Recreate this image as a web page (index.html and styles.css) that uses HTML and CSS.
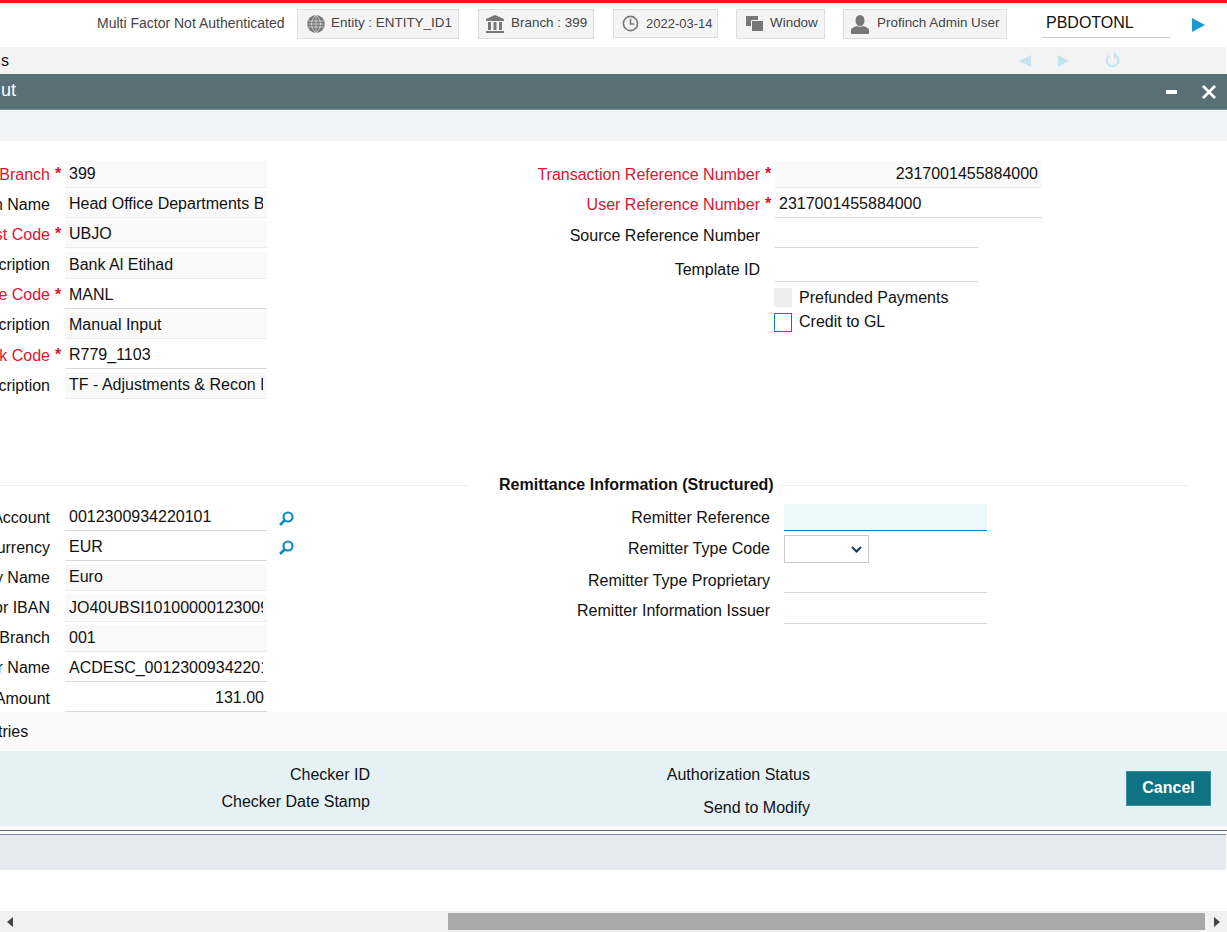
FILE: index.html
```html
<!DOCTYPE html>
<html lang="en">
<head>
    <meta charset="UTF-8" />
    <meta name="viewport" content="width=device-width, initial-scale=1" />
    <title>Transaction Input</title>
    <link rel="stylesheet" href="styles.css">
</head>
<body>
    <div class="redbar"></div>

    <header class="topbar">
        <span class="auth-note">Multi Factor Not Authenticated</span>
        <div class="top-btn btn-entity">
            <svg width="20" height="20" viewBox="0 0 20 20"><circle cx="10" cy="10" r="9" fill="#777"/><path d="M1 7h18M1 10h18M1 13h18M10 1v18M10 1c-6 5-6 13 0 18M10 1c6 5 6 13 0 18" fill="none" stroke="#f4f4f4" stroke-width=".6"/></svg>
            <span>Entity : ENTITY_ID1</span>
        </div>
        <div class="top-btn btn-branch">
            <svg width="20" height="20" viewBox="0 0 20 20"><path d="M10 1l9 4v2H1V5zM3 8h3v8H3zM8.500 8h3v8h-3zM14 8h3v8h-3zM1 17h18v2H1z" fill="#777"/></svg>
            <span>Branch : 399</span>
        </div>
        <div class="top-btn btn-date">
            <svg width="17" height="17" viewBox="0 0 18 18"><circle cx="9" cy="9" r="7.500" fill="none" stroke="#777" stroke-width="1.700"/><path d="M9 4v5.500h4" fill="none" stroke="#777" stroke-width="1.700"/></svg>
            <span>2022-03-14</span>
        </div>
        <div class="top-btn btn-window">
            <svg width="18" height="16" viewBox="0 0 18 16"><path d="M0 0h12v10H0z" fill="#777"/><path d="M5.500 4.500h12v11h-12z" fill="#777" stroke="#f4f4f4"/></svg>
            <span>Window</span>
        </div>
        <div class="top-btn btn-user">
            <svg width="18" height="19" viewBox="0 0 18 19"><ellipse cx="9" cy="5.500" rx="4.500" ry="5.500" fill="#777"/><path d="M0 19v-4c0-2 4-3.500 6-4 1.500 1 4.500 1 6 0 2 .5 6 2 6 4v4z" fill="#777"/></svg>
            <span>Profinch Admin User</span>
        </div>
        <div class="func-input">PBDOTONL</div>
        <svg class="go-icon" width="13" height="14" viewBox="0 0 13 14"><path d="M0 0l13 7-13 7z" fill="#1b9ad6"/></svg>
    </header>

    <div class="tabbar">
        <span class="tab-text">s</span>
        <div class="tab-tools">
            <svg width="12" height="12" viewBox="0 0 12 12"><path d="M12 0v12L0 6z" fill="#c5e3f0"/></svg>
            <svg class="tool-next" width="11" height="12" viewBox="0 0 11 12"><path d="M0 0v12l11-6z" fill="#c5e3f0"/></svg>
            <svg class="tool-refresh" width="15" height="16" viewBox="0 0 15 16"><path d="M10.500 4.500a5.800 5.800 0 1 1-6 0" fill="none" stroke="#c5e3f0" stroke-width="2"/><path d="M9 0v7l4.500-1z" fill="#c5e3f0"/></svg>
        </div>
    </div>

    <div class="titlebar">
        <span class="title-text">ut</span>
        <div class="title-tools">
            <span class="win-min"></span>
            <svg width="14" height="14" viewBox="0 0 14 14"><path d="M1 1l12 12M13 1L1 13" stroke="#fff" stroke-width="2.600"/></svg>
        </div>
    </div>

    <div class="toolbar"></div>

    <main class="form">
        <section class="upper">
            <div class="field-col">
                <label class="field-label req">Branch</label><span class="star">*</span>
                <div class="value ro"><span>399</span></div><i></i>
                <label class="field-label">n Name</label><span></span>
                <div class="value ro"><span>Head Office Departments B</span></div><i></i>
                <label class="field-label req">st Code</label><span class="star">*</span>
                <div class="value ro"><span>UBJO</span></div><i></i>
                <label class="field-label">cription</label><span></span>
                <div class="value ro"><span>Bank Al Etihad</span></div><i></i>
                <label class="field-label req">e Code</label><span class="star">*</span>
                <div class="value"><span>MANL</span></div><i></i>
                <label class="field-label">cription</label><span></span>
                <div class="value ro"><span>Manual Input</span></div><i></i>
                <label class="field-label req">k Code</label><span class="star">*</span>
                <div class="value"><span>R779_1103</span></div><i></i>
                <label class="field-label">cription</label><span></span>
                <div class="value ro"><span>TF - Adjustments &amp; Recon E</span></div><i></i>
            </div>

            <div class="ref-col">
                <div class="ref-row">
                    <label class="field-label req">Transaction Reference Number</label><span class="star">*</span>
                    <div class="value ro wide num"><span>2317001455884000</span></div>
                </div>
                <div class="ref-row">
                    <label class="field-label req">User Reference Number</label><span class="star">*</span>
                    <div class="value wide"><span>2317001455884000</span></div>
                </div>
                <div class="ref-row ref-low">
                    <label class="field-label">Source Reference Number</label><span></span>
                    <div class="value"></div>
                </div>
                <div class="ref-row ref-low ref-tall">
                    <label class="field-label">Template ID</label><span></span>
                    <div class="value"></div>
                </div>
                <div class="check-row check-first"><span class="check off"></span>Prefunded Payments</div>
                <div class="check-row"><span class="check"></span>Credit to GL</div>
            </div>
        </section>

        <div class="section-head">
            <span class="head-line line-left"></span>
            <h2>Remittance Information (Structured)</h2>
            <span class="head-line line-right"></span>
        </div>

        <section class="lower">
            <div class="field-col">
                <label class="field-label">Account</label><span></span>
                <div class="value"><span>0012300934220101</span></div>
                <svg class="lookup" width="15" height="15" viewBox="0 0 15 15"><circle cx="9" cy="6" r="4.500" fill="none" stroke="#0e8cc4" stroke-width="2.200"/><path d="M5.500 9.500L1 14" stroke="#0e8cc4" stroke-width="2.600"/></svg>
                <label class="field-label">urrency</label><span></span>
                <div class="value"><span>EUR</span></div>
                <svg class="lookup lookup-up" width="15" height="15" viewBox="0 0 15 15"><circle cx="9" cy="6" r="4.500" fill="none" stroke="#0e8cc4" stroke-width="2.200"/><path d="M5.500 9.500L1 14" stroke="#0e8cc4" stroke-width="2.600"/></svg>
                <label class="field-label">y Name</label><span></span>
                <div class="value ro"><span>Euro</span></div><i></i>
                <label class="field-label">or IBAN</label><span></span>
                <div class="value ro"><span>JO40UBSI10100000123009</span></div><i></i>
                <label class="field-label">Branch</label><span></span>
                <div class="value ro"><span>001</span></div><i></i>
                <label class="field-label">r Name</label><span></span>
                <div class="value"><span>ACDESC_001230093422011</span></div><i></i>
                <label class="field-label">Amount</label><span></span>
                <div class="value num"><span>131.00</span></div><i></i>
            </div>

            <div class="remit-col">
                <div class="remit-row">
                    <label class="field-label">Remitter Reference</label>
                    <div class="value focus"></div>
                </div>
                <div class="remit-row">
                    <label class="field-label">Remitter Type Code</label>
                    <div class="select-box">
                        <svg width="11" height="7" viewBox="0 0 11 7"><path d="M1 1l4.500 4.500L10 1" fill="none" stroke="#1a3a5c" stroke-width="2"/></svg>
                    </div>
                </div>
                <div class="remit-row remit-low">
                    <label class="field-label">Remitter Type Proprietary</label>
                    <div class="value"></div>
                </div>
                <div class="remit-row">
                    <label class="field-label">Remitter Information Issuer</label>
                    <div class="value"></div>
                </div>
            </div>
        </section>
    </main>

    <div class="entries">tries</div>

    <footer class="audit">
        <div class="audit-col col-checker">
            <span>Checker ID</span>
            <span>Checker Date Stamp</span>
        </div>
        <div class="audit-col col-status">
            <span>Authorization Status</span>
            <span class="send-modify">Send to Modify</span>
        </div>
        <button class="cancel-btn" type="button">Cancel</button>
    </footer>

    <div class="rule-dark"></div>
    <div class="rule-light"></div>
    <div class="statusband"></div>

    <div class="hscroll">
        <svg width="6" height="10" viewBox="0 0 6 10"><path d="M6 0v10L0 5z" fill="#444"/></svg>
        <div class="hscroll-thumb"></div>
        <svg width="6" height="10" viewBox="0 0 6 10"><path d="M0 0v10l6-5z" fill="#444"/></svg>
    </div>
</body>
</html>
```

FILE: styles.css
```css
/* Host screen, scrolled to the right inside its window */
html, body {
    height: 100%;
}
body {
    margin: 0;
    width: 1227px;
    height: 932px;
    overflow: hidden;
    display: flex;
    flex-direction: column;
    background: #fff;
    color: #111;
    font-family: 'Liberation Sans', Arial, sans-serif;
    font-size: 16px;
}

.redbar {
    height: 3px;
    background: #ff1414;
    flex: none;
}

/* top bar */
.topbar {
    height: 44px;
    display: flex;
    align-items: flex-start;
    padding: 6px 0 0 97px;
    box-sizing: border-box;
    font-size: 14px;
    color: #444;
    flex: none;
}
.auth-note {
    width: 187px;
    margin-right: 13px;
    line-height: 28px;
    white-space: nowrap;
}
.top-btn {
    height: 30px;
    box-sizing: border-box;
    margin-right: 19px;
    display: flex;
    align-items: center;
    gap: 5px;
    padding-left: 8px;
    background: #f4f4f4;
    border: 1px solid #ddd;
    font-size: 13.44px;
    white-space: nowrap;
}
.top-btn span {
    margin-top: -3px;
}
.btn-entity { width: 162px; }
.btn-branch { width: 116px; padding-left: 6px; gap: 6px; }
.btn-date { width: 105px; height: 29px; margin-right: 18px; gap: 7px; font-size: 13px; }
.btn-date span { margin-top: 0; }
.btn-window { width: 89px; margin-right: 18px; padding-left: 9px; gap: 6px; }
.btn-user { width: 164px; margin-right: 35px; padding-left: 7px; gap: 8px; }
.func-input {
    width: 128px;
    height: 29px;
    box-sizing: border-box;
    padding-left: 4px;
    line-height: 28px;
    font-size: 16px;
    color: #111;
    border-bottom: 1px solid #ccc;
}
.go-icon {
    margin: 9px 0 0 22px;
}

/* tab strip */
.tabbar {
    height: 27px;
    margin-right: 1px;
    padding-left: 1px;
    display: flex;
    align-items: center;
    background: #f3f3f3;
    flex: none;
}
.tab-text {
    flex: 1;
}
.tab-tools {
    display: flex;
    align-items: center;
    width: 207px;
}
.tool-next { margin-left: 27px; }
.tool-refresh { margin-left: 36px; margin-top: -4px; }

/* window title */
.titlebar {
    height: 36px;
    box-sizing: border-box;
    padding-left: 1px;
    display: flex;
    align-items: center;
    justify-content: space-between;
    background: #586f75;
    border-bottom: 1px solid #7a9096;
    color: #fff;
    font-size: 18px;
    flex: none;
}
.title-text {
    margin-top: -2px;
}
.title-tools {
    display: flex;
    align-items: center;
    gap: 25px;
    padding-right: 11px;
}
.win-min {
    width: 11px;
    height: 4px;
    margin-top: 1px;
    background: #fff;
}

.toolbar {
    height: 30px;
    background: #f3f4f6;
    border-bottom: 1px solid #eee;
    flex: none;
}

/* form */
.form {
    height: 571px;
    flex: none;
}
.upper {
    height: 334px;
    box-sizing: border-box;
    padding-top: 20px;
    display: flex;
}
.field-col {
    width: 520px;
    flex: none;
    display: grid;
    grid-template-columns: 50px 15px 202px 13px 15px;
    grid-auto-rows: 27px;
    row-gap: 3.2px;
    align-content: start;
}
.field-col i {
    grid-column: 4 / 6;
}
.field-label {
    display: flex;
    justify-content: flex-end;
    align-items: center;
    box-sizing: border-box;
    white-space: nowrap;
}
.req, .star {
    color: #dc1431;
}
.star {
    padding: 0 0 0 5px;
    font-weight: 700;
    line-height: 26px;
}
.value {
    height: 27px;
    box-sizing: border-box;
    padding: 0 4px;
    line-height: 26px;
    background: #fff;
    border-bottom: 1px solid #d8d8d8;
    white-space: nowrap;
}
.value span {
    display: block;
    overflow: hidden;
}
.value.ro {
    background: #f9f9f9;
    border-bottom-color: #ececec;
}
.value.num {
    padding-right: 3px;
    text-align: right;
}
.value.focus {
    background: #edf8fb;
    border-bottom-color: #0a7ab5;
}
.lookup {
    grid-column: 5;
    margin: 7px 0 0 -1px;
}
.lookup-up {
    margin-top: 6px;
}

.ref-col {
    flex: 1;
    display: flex;
    flex-direction: column;
    gap: 3.33px;
}
.ref-row {
    display: grid;
    grid-template-columns: 240px 15px 203px;
    height: 27px;
}
.ref-row .value.wide {
    width: 267px;
}
.ref-row .value.num {
    padding-right: 4px;
}
.ref-low .field-label {
    padding-top: 1px;
}
.ref-low .value {
    height: 26px;
}
.ref-tall {
    margin-top: 4px;
}
.check-row {
    display: flex;
    align-items: center;
    gap: 7px;
    height: 19px;
    margin: 2px 0 0 254px;
}
.check-first {
    margin-top: 2px;
}
.check {
    width: 18px;
    height: 19px;
    box-sizing: border-box;
    border: 1px solid #0a7ab5;
}
.check.off {
    background: #eee;
    border-color: #eee;
}

.section-head {
    height: 20px;
    margin-bottom: 9px;
    display: flex;
    align-items: center;
}
.section-head h2 {
    margin: 0;
    width: 309px;
    padding-left: 30px;
    box-sizing: border-box;
    font-size: 16px;
    white-space: nowrap;
}
.head-line {
    height: 1px;
    background: #eee;
}
.line-left { width: 469px; }
.line-right { width: 411px; }

.lower {
    display: flex;
}
.remit-col {
    flex: 1;
    display: flex;
    flex-direction: column;
    gap: 4px;
}
.remit-row {
    display: grid;
    grid-template-columns: 250px 203px;
    column-gap: 14px;
    height: 27px;
}
.remit-low .field-label {
    padding-top: 2px;
}
.select-box {
    width: 85px;
    height: 28px;
    box-sizing: border-box;
    display: flex;
    align-items: center;
    justify-content: flex-end;
    padding-right: 6px;
    border: 1px solid #ccc;
    background: #fff;
}

.entries {
    height: 39px;
    line-height: 39px;
    text-indent: -2px;
    background: #fafafa;
    flex: none;
}

/* audit footer */
.audit {
    height: 75px;
    display: flex;
    align-items: flex-start;
    background: #e5f1f4;
    flex: none;
}
.audit-col {
    display: flex;
    flex-direction: column;
    align-items: flex-end;
    padding-top: 15px;
    gap: 9px;
    white-space: nowrap;
}
.col-checker { width: 370px; }
.col-status { width: 440px; }
.send-modify { margin-top: 6px; }
.cancel-btn {
    width: 85px;
    height: 35px;
    margin: 20px 0 0 316px;
    padding-bottom: 3px;
    background: #0e7382;
    border: 1px solid #3a8f9c;
    color: #fff;
    font-family: inherit;
    font-size: 16px;
    font-weight: 700;
}

.rule-dark {
    height: 1px;
    margin-top: 4px;
    background: #5a7074;
    flex: none;
}
.rule-light {
    height: 1px;
    margin-top: 3px;
    margin-right: 1px;
    background: #7b8aa8;
    flex: none;
}
.statusband {
    height: 35px;
    margin-right: 1px;
    background: #e6e9ee;
    flex: none;
}

/* horizontal scroll bar */
.hscroll {
    height: 21px;
    margin-top: 41px;
    display: flex;
    align-items: center;
    padding-left: 7px;
    background: #f1f1f1;
    flex: none;
}
.hscroll-thumb {
    width: 757px;
    height: 17px;
    margin: 0 9px 0 435px;
    background: #a8a8a8;
}
```
